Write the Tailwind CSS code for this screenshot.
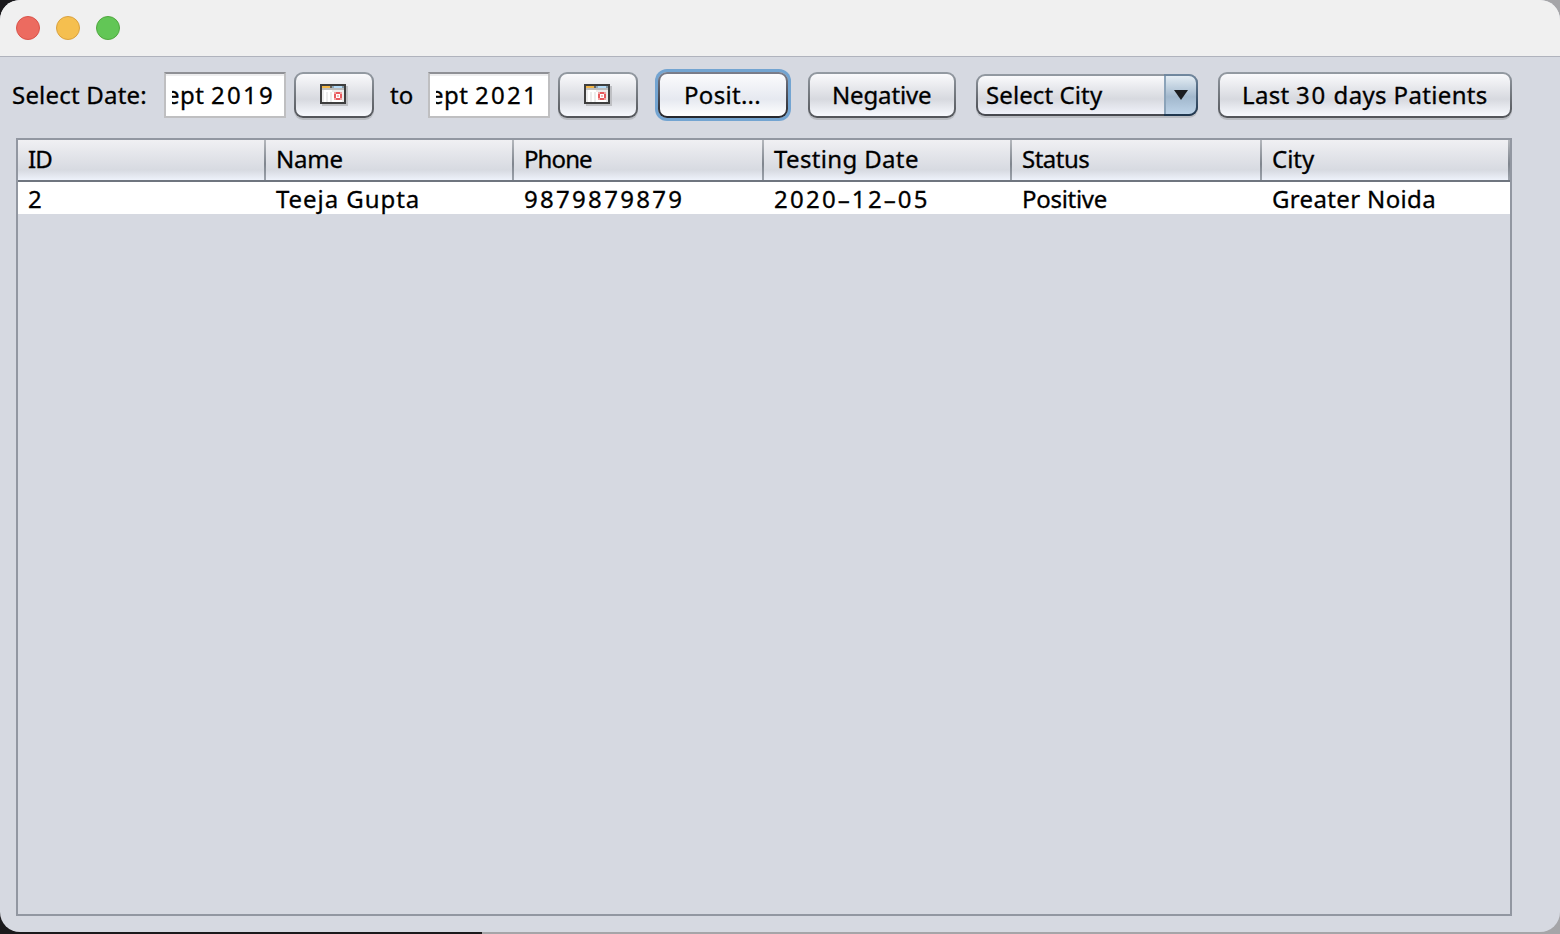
<!DOCTYPE html>
<html lang="en">
<head>
<meta charset="utf-8">
<title>Patients</title>
<script src="https://cdn.jsdelivr.net/npm/@tailwindcss/browser@4"></script>
</head>
<body class="h-[934px] w-[1560px] overflow-hidden bg-linear-to-r from-[#1b1a1c] from-[482px] to-[#a5a5a8] to-[482px] font-['Noto_Sans','Open_Sans',sans-serif] text-[24px] leading-[32px] text-black whitespace-nowrap [-webkit-text-stroke:0.3px_black]">
<svg class="hidden">
  <symbol id="cal" viewBox="0 0 28 22">
    <path fill="#bfc0c4" d="M2 2h26v20H2z"/>
    <path fill="#3e3e3e" d="M0 0h26v20H0z"/>
    <path fill="#fff" d="M2 2h22v16H2z"/>
    <path fill="#f2b646" d="M2 2h8v2H2z"/><path fill="#6b655b" d="M10 2h2v2h-2z"/><path fill="#8fa9bd" d="M12 2h2v2h-2z"/><path fill="#b5dbf8" d="M14 2h8v2h-8z"/><path fill="#8398a6" d="M22 2h2v2h-2z"/>
    <path fill="#bdbdbd" d="M2 4h22v2H2z"/>
    <path fill="#ececec" d="M2 6h2v12H2zM6 8h2v10H6zM10 8h2v10h-2zM12 6h12v2H12zM22 8h2v10h-2z"/>
    <path fill="#f3a3a3" d="M14 8h8v8h-8z"/>
    <path fill="#e85a5e" d="M16 8h4v2h-4zM14 10h2v4h-2zM20 10h2v4h-2zM16 14h4v2h-4z"/>
    <path fill="#fff" d="M16 10h4v4h-4z"/><path fill="#f6b8b8" d="M17 11h2v2h-2z"/>
  </symbol>
</svg>
<div class="flex h-[932px] w-full flex-col overflow-hidden rounded-[20px] bg-[#d6d9e1]">
  <header class="flex h-[57px] shrink-0 items-center gap-4 border-b border-[#b0b3bd] bg-[#f0f0f0] pl-4">
    <i class="size-6 rounded-full border border-[#d9534a] bg-[#ec6b60]"></i>
    <i class="size-6 rounded-full border border-[#d9a13f] bg-[#f5bf4f]"></i>
    <i class="size-6 rounded-full border border-[#50a73f] bg-[#62c656]"></i>
  </header>
  <div class="flex h-[81px] shrink-0 items-start pt-[15px] pl-3 leading-[46px]">
    <span class="w-[152px] tracking-[0.2px]">Select Date:</span>
    <div class="h-[46px] w-[122px] border-2 border-[#bfbfc1] border-t-[#8f9095] bg-white pl-[6px] leading-[42px] shadow-[inset_0_2px_0_#ededee]"><div class="flex h-full w-[103px] justify-end overflow-hidden"><span class="tracking-[0.4px]">Sept <span class="tracking-[2.3px]">2019</span></span></div></div>
    <div class="ml-2 h-[46px] w-20 rounded-[9px] bg-linear-to-b from-[#949ba3] to-[#525459] p-[2px] shadow-[0_2px_0_#b9bcc2]"><div class="h-full rounded-[7px] bg-linear-to-b from-[#fafafc] via-[#d7d9df] via-60% to-[#f8faff] pt-[10px] pl-6"><svg class="h-[22px] w-7"><use href="#cal"/></svg></div></div>
    <span class="ml-4 w-[38px]">to</span>
    <div class="h-[46px] w-[122px] border-2 border-[#bfbfc1] border-t-[#8f9095] bg-white pl-[6px] leading-[42px] shadow-[inset_0_2px_0_#ededee]"><div class="flex h-full w-[103px] justify-end overflow-hidden"><span class="tracking-[0.4px]">Sept <span class="tracking-[2.3px]">2021</span></span></div></div>
    <div class="ml-2 h-[46px] w-20 rounded-[9px] bg-linear-to-b from-[#949ba3] to-[#525459] p-[2px] shadow-[0_2px_0_#b9bcc2]"><div class="h-full rounded-[7px] bg-linear-to-b from-[#fafafc] via-[#d7d9df] via-60% to-[#f8faff] pt-[10px] pl-6"><svg class="h-[22px] w-7"><use href="#cal"/></svg></div></div>
    <div class="ml-5 h-[46px] w-[130px] rounded-[9px] bg-linear-to-b from-[#7b7e8c] to-[#24262c] p-[2px] shadow-[0_0_0_3px_#73a4d1]"><div class="h-full rounded-[7px] bg-linear-to-b from-[#fbfbfd] via-[#e6e9f0] via-60% to-white pl-6 leading-[42px]"><span class="tracking-[0.3px]">Posit...</span></div></div>
    <div class="ml-5 h-[46px] w-[148px] rounded-[9px] bg-linear-to-b from-[#949ba3] to-[#525459] p-[2px] shadow-[0_2px_0_#b9bcc2]"><div class="h-full rounded-[7px] bg-linear-to-b from-[#fafafc] via-[#d7d9df] via-60% to-[#f8faff] pl-[22px] leading-[42px]"><span class="tracking-[-0.15px]">Negative</span></div></div>
    <div class="mt-[2px] ml-5 flex h-[42px] w-[222px] rounded-[9px] bg-linear-to-b from-[#949ba3] to-[#45474d] p-[2px] shadow-[0_2px_0_#b9bcc2]">
      <div class="h-full w-[186px] rounded-l-[7px] bg-linear-to-b from-[#fafafc] via-[#d7d9df] via-60% to-[#f0f2fa] pl-2 leading-[38px]"><span class="tracking-[0.1px]">Select City</span></div>
      <div class="-my-[2px] -mr-[2px] flex-1 rounded-r-[9px] bg-linear-to-b from-[#7289a0] to-[#1e354d] py-[2px] pr-[2px]"><div class="flex h-full items-center justify-center rounded-r-[7px] border-l-2 border-[#8ba3b9] bg-linear-to-b from-[#e4edf4] via-[#a2b8cd] via-55% to-[#bdd3e8]"><svg class="h-3 w-[14px]" viewBox="0 0 14 12"><path fill="#1c1d20" d="M0 1h14L7 11z"/></svg></div></div>
    </div>
    <div class="ml-5 h-[46px] w-[294px] rounded-[9px] bg-linear-to-b from-[#949ba3] to-[#525459] p-[2px] shadow-[0_2px_0_#b9bcc2]"><div class="h-full rounded-[7px] bg-linear-to-b from-[#fafafc] via-[#d7d9df] via-60% to-[#f8faff] pl-[22px] leading-[42px]"><span class="tracking-[0.3px]">Last <span class="tracking-[1.8px]">30</span> <span class="tracking-[0.35px]">days Patients</span></span></div></div>
  </div>
  <main class="ml-4 h-[778px] w-[1496px] border-2 border-[#9297a1]">
    <div class="grid h-[42px] grid-cols-[248px_248px_250px_248px_250px_248px] border-b-2 border-[#6f757f] bg-linear-to-b from-[#f0f0f3] via-[#d7dae1] via-75% to-[#eef2fb] leading-[38px] *:flex *:justify-between *:pl-[10px]">
      <div><span class="tracking-[-1px]">ID</span><i class="w-[2px] bg-linear-to-b from-[#b4b7bc] via-[#7f858e] via-60% to-[#9da3ac]"></i></div>
      <div><span class="tracking-[-0.2px]">Name</span><i class="w-[2px] bg-linear-to-b from-[#b4b7bc] via-[#7f858e] via-60% to-[#9da3ac]"></i></div>
      <div><span class="tracking-[-0.9px]">Phone</span><i class="w-[2px] bg-linear-to-b from-[#b4b7bc] via-[#7f858e] via-60% to-[#9da3ac]"></i></div>
      <div><span class="tracking-[0.35px]">Testing Date</span><i class="w-[2px] bg-linear-to-b from-[#b4b7bc] via-[#7f858e] via-60% to-[#9da3ac]"></i></div>
      <div><span class="tracking-[-0.5px]">Status</span><i class="w-[2px] bg-linear-to-b from-[#b4b7bc] via-[#7f858e] via-60% to-[#9da3ac]"></i></div>
      <div><span>City</span><i class="w-[2px] bg-linear-to-b from-[#b4b7bc] via-[#7f858e] via-60% to-[#9da3ac]"></i></div>
    </div>
    <div class="grid h-8 grid-cols-[248px_248px_250px_248px_250px_248px] bg-white leading-[34px] *:pl-[10px]">
      <div><span>2</span></div><div><span class="tracking-[0.95px]">Teeja Gupta</span></div><div><span class="tracking-[2.3px]">9879879879</span></div><div><span class="tracking-[2.3px]">2020<span class="mr-[4px] ml-[2px] inline-block scale-x-[1.7] tracking-normal">-</span>12<span class="mr-[4px] ml-[2px] inline-block scale-x-[1.7] tracking-normal">-</span>05</span></div><div><span class="tracking-[-0.3px]">Positive</span></div><div><span class="tracking-[0.35px]">Greater Noida</span></div>
    </div>
  </main>
</div>
</body>
</html>
